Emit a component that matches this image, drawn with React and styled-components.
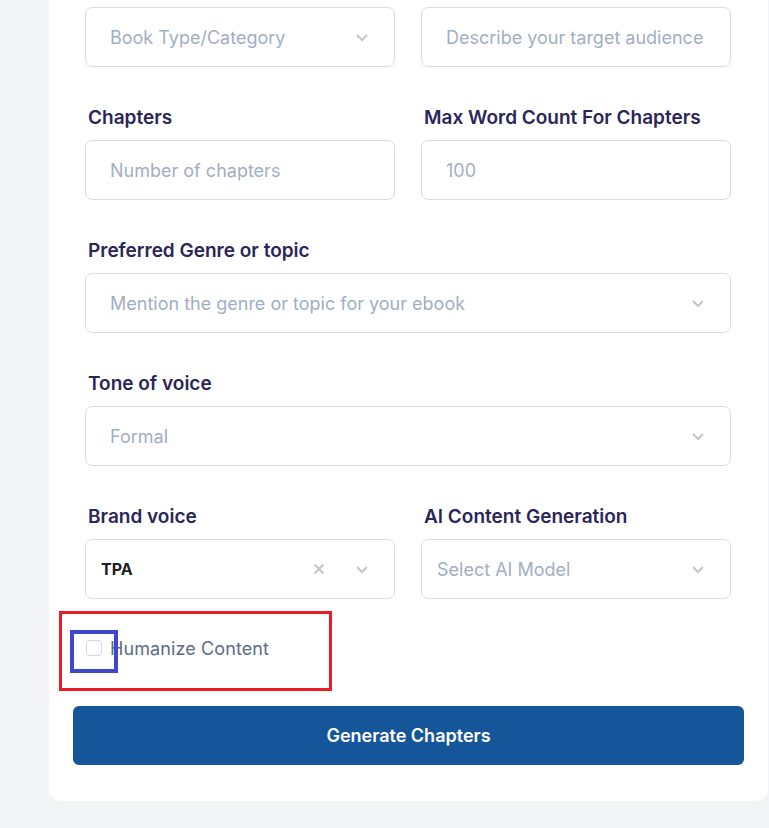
import React from 'react';
import styled, { createGlobalStyle } from 'styled-components';

const GlobalStyle = createGlobalStyle`
    html, body {
        margin: 0;
        padding: 0;
        background: #f3f4f6;
        font-family: Inter, "Noto Sans", sans-serif;
    }
`;

const Page = styled.div`
    width: 769px;
    height: 828px;
    overflow: hidden;
    background: #f3f4f6;
`;

const Card = styled.div`
    margin-left: 49px;
    width: 719px;
    box-sizing: border-box;
    background: #ffffff;
    border-radius: 0 0 12px 12px;
    padding: 7px 37px 36px 36px;
`;

const Row = styled.div`
    display: grid;
    grid-template-columns: ${(p) => (p.$single ? '1fr' : '1fr 1fr')};
    column-gap: 26px;
    margin-top: ${(p) => (p.$first ? '0' : '39px')};
`;

const Field = styled.div`
    display: flex;
    flex-direction: column;
`;

const Label = styled.label`
    display: block;
    margin: 0 0 11px 3px;
    padding-top: 1px;
    font-size: 19px;
    line-height: 22px;
    font-weight: 600;
    color: #2a2658;
    white-space: nowrap;
`;

const Box = styled.div`
    height: 60px;
    box-sizing: border-box;
    border: 1px solid #d9dce5;
    border-radius: 7px;
    background: #fff;
    display: flex;
    align-items: center;
    padding-left: ${(p) => (p.$compact ? '15px' : '24px')};
    padding-right: 25px;
    font-size: 18px;
`;

const Placeholder = styled.span`
    flex: 1;
    color: #a3aec2;
    white-space: nowrap;
`;

const Value = styled.span`
    flex: 1;
    color: #1d1d22;
    font-weight: 700;
    font-size: 16px;
`;

const Indicators = styled.div`
    display: flex;
    align-items: center;
    gap: 30px;
`;

const CheckRow = styled.div`
    position: relative;
    display: flex;
    align-items: center;
    gap: 8px;
    height: 24px;
    margin-top: 37px;
    padding-left: 1px;
`;

const CheckBox = styled.span`
    width: 16px;
    height: 16px;
    box-sizing: border-box;
    border: 1px solid #d3d6de;
    border-radius: 4px;
    background: #fff;
`;

const CheckText = styled.span`
    font-size: 18px;
    color: #5c6b88;
    letter-spacing: 0.1px;
`;

const Highlight = styled.div`
    position: absolute;
    box-sizing: border-box;
    pointer-events: none;
    border: ${(p) => p.$thick}px solid ${(p) => p.$color};
    left: ${(p) => p.$left}px;
    top: ${(p) => p.$top}px;
    width: ${(p) => p.$w}px;
    height: ${(p) => p.$h}px;
`;

const Button = styled.button`
    display: block;
    width: calc(100% + 25px);
    margin: 46px -12px 0 -12px;
    height: 59px;
    border: none;
    border-radius: 6px;
    background: #155599;
    color: #fff;
    font-family: Inter, "Noto Sans", sans-serif;
    font-size: 18px;
    font-weight: 600;
`;

const Chevron = () => (
    <svg width="14" height="14" viewBox="0 0 14 14">
        <path d="M2 5 L7 10 L12 5" fill="none" stroke="#c6c6c6" strokeWidth="2" />
    </svg>
);

const Cross = () => (
    <svg width="12" height="12" viewBox="0 0 12 12">
        <path d="M1.5 1.5 L10.5 10.5 M10.5 1.5 L1.5 10.5" fill="none" stroke="#c6c6c6" strokeWidth="2.2" />
    </svg>
);

const Select = ({ placeholder, value, compact, clearable }) => (
    <Box $compact={compact}>
        {value ? <Value>{value}</Value> : <Placeholder>{placeholder}</Placeholder>}
        <Indicators>
            {clearable && <Cross />}
            <Chevron />
        </Indicators>
    </Box>
);

const Input = ({ placeholder }) => (
    <Box>
        <Placeholder>{placeholder}</Placeholder>
    </Box>
);

export default function App() {
    return (
        <Page>
            <GlobalStyle />
            <Card>
                <Row $first>
                    <Select placeholder="Book Type/Category" />
                    <Input placeholder="Describe your target audience" />
                </Row>
                <Row>
                    <Field>
                        <Label>Chapters</Label>
                        <Input placeholder="Number of chapters" />
                    </Field>
                    <Field>
                        <Label>Max Word Count For Chapters</Label>
                        <Input placeholder="100" />
                    </Field>
                </Row>
                <Row $single>
                    <Field>
                        <Label>Preferred Genre or topic</Label>
                        <Select placeholder="Mention the genre or topic for your ebook" />
                    </Field>
                </Row>
                <Row $single>
                    <Field>
                        <Label>Tone of voice</Label>
                        <Select placeholder="Formal" />
                    </Field>
                </Row>
                <Row>
                    <Field>
                        <Label>Brand voice</Label>
                        <Select value="TPA" compact clearable />
                    </Field>
                    <Field>
                        <Label>AI Content Generation</Label>
                        <Select placeholder="Select AI Model" compact />
                    </Field>
                </Row>
                <CheckRow>
                    <CheckBox />
                    <CheckText>Humanize Content</CheckText>
                    <Highlight $color="#ec1c24" $thick={3} $left={-26} $top={-25} $w={273} $h={80} />
                    <Highlight $color="#3f48cc" $thick={4} $left={-15} $top={-6} $w={48} $h={43} />
                </CheckRow>
                <Button>Generate Chapters</Button>
            </Card>
        </Page>
    );
}
